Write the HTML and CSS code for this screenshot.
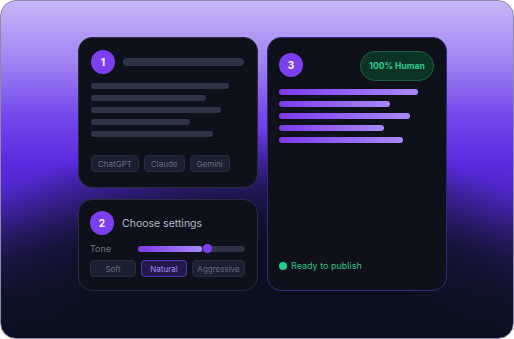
FILE: index.html
```html
<!DOCTYPE html>
<html lang="en">
<head>
  <meta charset="UTF-8">
  <meta name="viewport" content="width=device-width, initial-scale=1.0">
  <title>Humanizer Steps</title>
  <link rel="stylesheet" href="styles.css">
</head>
<body>
  <div class="frame">
    <div class="board">
      <div class="col">
        <div class="card card-input">
          <div class="head">
            <span class="step">1</span>
            <span class="bar title-bar"></span>
          </div>
          <div class="lines">
            <span class="bar" style="width: 138px"></span>
            <span class="bar" style="width: 115px"></span>
            <span class="bar" style="width: 130px"></span>
            <span class="bar" style="width: 99px"></span>
            <span class="bar" style="width: 122px"></span>
          </div>
          <div class="chips">
            <span class="chip">ChatGPT</span>
            <span class="chip">Claude</span>
            <span class="chip">Gemini</span>
          </div>
        </div>

        <div class="card card-settings">
          <div class="head">
            <span class="step">2</span>
            <span class="head-text">Choose settings</span>
          </div>
          <div class="tone">
            <span class="tone-label">Tone</span>
            <div class="track">
              <div class="fill"></div>
              <div class="thumb"></div>
            </div>
          </div>
          <div class="options">
            <span class="option">Soft</span>
            <span class="option active">Natural</span>
            <span class="option wide">Aggressive</span>
          </div>
        </div>
      </div>

      <div class="card card-output">
        <div class="head head-output">
          <span class="step">3</span>
          <span class="badge">100% Human</span>
        </div>
        <div class="lines lines-output">
          <span class="bar glow" style="width: 139px"></span>
          <span class="bar glow" style="width: 111px"></span>
          <span class="bar glow" style="width: 131px"></span>
          <span class="bar glow" style="width: 105px"></span>
          <span class="bar glow" style="width: 124px"></span>
        </div>
        <div class="status">
          <span class="dot"></span>
          <span>Ready to publish</span>
        </div>
      </div>
    </div>
  </div>
</body>
</html>
```

FILE: styles.css
```css
body {
  margin: 0;
  background: #fff;
  font-family: Inter, 'Noto Sans', sans-serif;
}
.frame {
  width: 514px;
  height: 339px;
  box-sizing: border-box;
  border: 1px solid #8c8aa8;
  border-radius: 16px;
  overflow: hidden;
  background:
    radial-gradient(ellipse 70% 62% at 50% 100%, #0b1020 45%, rgba(11,16,32,0.7) 70%, rgba(11,16,32,0) 100%),
    linear-gradient(180deg, #c7b6f7 0%, #a283f3 18%, #7448ec 34%, #5a2be0 48%, #4a24b8 62%, #2a1a6a 76%, #121433 90%, #0b1020 100%);
  padding: 36px 0 0 77px;
}
.board {
  display: flex;
  gap: 9px;
}
.col {
  display: flex;
  flex-direction: column;
  gap: 11px;
}
.card {
  width: 180px;
  box-sizing: border-box;
  background: #0e1119;
  border: 1px solid #2a2d42;
  border-radius: 14px;
}
.card-input {
  height: 151px;
  padding: 12px 12px 0 12px;
}
.card-settings {
  height: 92px;
  padding: 11px 12px 0 11px;
}
.card-output {
  height: 254px;
  border-color: #35287a;
  padding: 12px 12px 0 11px;
  display: flex;
  flex-direction: column;
}
.head {
  display: flex;
  align-items: center;
  gap: 8px;
}
.step {
  width: 24px;
  height: 24px;
  border-radius: 50%;
  background: #7b3ff0;
  color: #fff;
  font-size: 10px;
  font-weight: 700;
  display: flex;
  align-items: center;
  justify-content: center;
  flex-shrink: 0;
}
.bar {
  display: block;
  height: 6px;
  border-radius: 3px;
  background: #2e3348;
}
.title-bar {
  height: 8px;
  border-radius: 4px;
  flex: 1;
  margin-right: 1px;
}
.lines {
  display: flex;
  flex-direction: column;
  gap: 6px;
  margin-top: 9px;
}
.chips {
  display: flex;
  gap: 5px;
  margin-top: 18px;
}
.chip {
  height: 17px;
  box-sizing: border-box;
  padding: 0 6px;
  display: flex;
  align-items: center;
  border-radius: 4px;
  background: #1b2030;
  border: 1px solid #262c3d;
  color: #646c82;
  font-size: 8px;
}
.head-text {
  color: #b4b8c8;
  font-size: 10.5px;
}
.tone {
  display: flex;
  align-items: center;
  margin-top: 8px;
}
.tone-label {
  width: 48px;
  color: #6b7285;
  font-size: 9px;
}
.track {
  position: relative;
  flex: 1;
  height: 6px;
  border-radius: 3px;
  background: #2e3348;
}
.fill {
  width: 64px;
  height: 6px;
  border-radius: 3px;
  background: linear-gradient(90deg, #7c3aed, #a78bfa);
}
.thumb {
  position: absolute;
  left: 65px;
  top: -2px;
  width: 9px;
  height: 9px;
  border-radius: 50%;
  background: #7b3ff0;
}
.options {
  display: flex;
  gap: 5px;
  margin-top: 6px;
}
.option {
  width: 46px;
  height: 17px;
  box-sizing: border-box;
  display: flex;
  align-items: center;
  justify-content: center;
  border-radius: 4px;
  background: #1b2030;
  border: 1px solid #262c3d;
  color: #646c82;
  font-size: 8px;
}
.option.wide {
  width: 53px;
}
.option.active {
  background: #23194a;
  border-color: #4f36b0;
  color: #a78bfa;
}
.head-output {
  justify-content: space-between;
  align-items: flex-start;
}
.head-output .step {
  margin-top: 3px;
}
.badge {
  width: 74px;
  height: 30px;
  box-sizing: border-box;
  border-radius: 15px;
  background: #0b3326;
  border: 1px solid #1d5e45;
  color: #2fd08f;
  font-size: 8.5px;
  font-weight: 700;
  display: flex;
  align-items: center;
  justify-content: center;
  margin-top: 1px;
}
.lines-output {
  margin-top: 8px;
}
.glow {
  background: linear-gradient(90deg, #7c3aed, #a88bfb);
}
.status {
  margin-top: auto;
  margin-bottom: 19px;
  display: flex;
  align-items: center;
  gap: 4px;
  color: #27c48a;
  font-size: 9px;
}
.dot {
  width: 8px;
  height: 8px;
  border-radius: 50%;
  background: #1fd18f;
}
```
